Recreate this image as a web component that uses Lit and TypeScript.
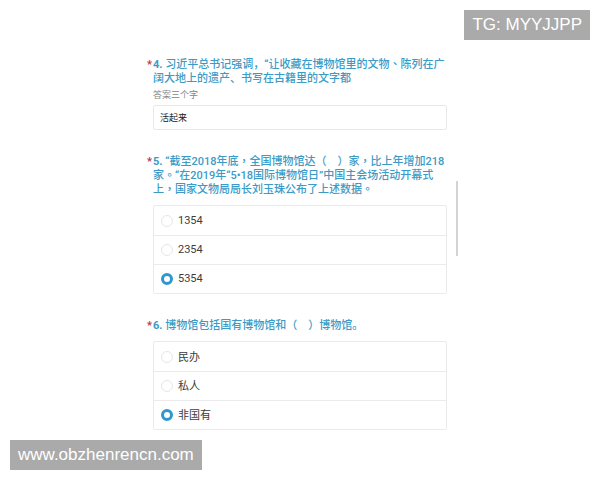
/**
 * Quiz page: three museum questions with answers filled in.
 *
 * Questions come from a small data list; each one is either
 * a text answer or a single choice.
 */
import { LitElement, html, css, nothing } from 'lit';
import type { TemplateResult } from 'lit';
import { customElement, property, state } from 'lit/decorators.js';

interface Question {
  no: number;
  title: TemplateResult;
  hint?: string;
  options?: string[];
  answer: string;
  textLabels?: boolean;
}

// Full-width punctuation.
const COMMA = '\uFF0C';
const STOP = '\u3002';
const PAUSE = '\u3001';
const BLANK = '\uFF08\u3000\uFF09';

// Punctuation centred in its square.
const mid = (s: string) => html`<span class="mid" lang="zh-TW">${s}</span>`;

const QUESTIONS: Question[] = [
  {
    no: 4,
    title: html`习近平总书记强调${COMMA}“让收藏在博物馆里的文物${mid(PAUSE)}陈列在广<br />阔大地上的遗产${PAUSE}书写在古籍里的文字都`,
    hint: '答案三个字',
    answer: '活起来',
  },
  {
    no: 5,
    title: html`“截至2018年底${mid(COMMA)}全国博物馆达${BLANK}家${mid(COMMA)}比上年增加218<br />家${mid(STOP)}“在2019年“5•18国际博物馆日”中国主会场活动开幕式<br />上${mid(COMMA)}国家文物局局长刘玉珠公布了上述数据${mid(STOP)}`,
    options: ['1354', '2354', '5354'],
    answer: '5354',
  },
  {
    no: 6,
    title: html`博物馆包括国有博物馆和${BLANK}博物馆${STOP}`,
    options: ['民办', '私人', '非国有'],
    answer: '非国有',
    textLabels: true,
  },
];

@customElement('quiz-question')
export class QuizQuestion extends LitElement {
  @property({ attribute: false }) question!: Question;
  @state() private value = '';

  static styles = css`
    :host {
      display: block;
    }
    .title {
      display: flex;
      margin: 0 0 0 -6px;
      color: #3b9bc6;
      font-size: 11px;
      font-weight: 500;
      line-height: 14px;
      white-space: nowrap;
    }
    .star {
      width: 6px;
      color: #c8323c;
      font-weight: 700;
    }
    .no {
      font-weight: 700;
    }
    .mid {
      font-family: Roboto, 'Noto Sans CJK TC', sans-serif;
    }
    .hint {
      display: block;
      margin-top: 3px;
      color: #858585;
      font-size: 9px;
      line-height: 12px;
    }
    .text {
      display: block;
      box-sizing: border-box;
      width: 100%;
      height: 25px;
      margin-top: 4px;
      padding: 0 6px;
      border: 1px solid #e8e8e8;
      border-radius: 2px;
      outline: none;
      background: #fff;
      color: #222;
      font-family: inherit;
      font-size: 9px;
    }
    .options {
      margin-top: 8px;
      border: 1px solid #ebebeb;
      border-radius: 2px;
    }
    .option {
      display: flex;
      align-items: center;
      gap: 5px;
      box-sizing: border-box;
      height: 29px;
      padding: 0 7px;
      color: #3c3c3c;
      font-size: 11px;
      line-height: 14px;
    }
    .option + .option {
      border-top: 1px solid #ebebeb;
    }
    .radio {
      appearance: none;
      box-sizing: border-box;
      width: 12px;
      height: 12px;
      margin: 0;
      border: 1px solid #e6e6e6;
      border-radius: 50%;
      background: #fff;
    }
    .radio:checked {
      border: 3px solid #2f97d0;
    }
    .han {
      padding-top: 2px;
    }
  `;

  connectedCallback(): void {
    super.connectedCallback();
    this.value = this.question.answer;
  }

  render() {
    const q = this.question;
    const title = html`
      <span class="star">*</span>
      <span><span class="no">${q.no}. </span>${q.title}</span>
    `;
    return html`
      ${q.options
        ? html`<div class="title" id="title">${title}</div>`
        : html`<label class="title" for="answer">${title}</label>`}
      ${q.hint ? html`<span class="hint">${q.hint}</span>` : nothing}
      ${q.options ? this._renderOptions(q.options) : html`
        <input
          class="text"
          id="answer"
          type="text"
          .value=${this.value}
          @input=${(e: Event) => {
            this.value = (e.target as HTMLInputElement).value;
          }}
        />
      `}
    `;
  }

  private _renderOptions(options: string[]) {
    return html`
      <div class="options" role="radiogroup" aria-labelledby="title">
        ${options.map((o) => html`
          <label class="option">
            <input
              class="radio"
              type="radio"
              name="choice"
              .checked=${this.value === o}
              @change=${() => { this.value = o; }}
            />
            <span class=${this.question.textLabels ? 'han' : 'num'}>${o}</span>
          </label>
        `)}
      </div>
    `;
  }
}

@customElement('app-root')
export class AppRoot extends LitElement {
  static styles = css`
    :host {
      display: block;
      position: relative;
      box-sizing: border-box;
      min-height: 100vh;
      background: #fff;
      font-family: Roboto, 'Noto Sans CJK SC', sans-serif;
    }
    .quiz {
      position: relative;
      display: flex;
      flex-direction: column;
      gap: 25px;
      box-sizing: border-box;
      max-width: 294px;
      margin: 0 auto;
      padding: 58px 0 48px;
    }
    .thumb {
      position: absolute;
      top: 181px;
      right: -11px;
      width: 2px;
      height: 75px;
      background: #d4d4d4;
    }
    .badge {
      position: absolute;
      padding: 0 8px;
      background: #aaa;
      color: #fff;
      font-family: 'Liberation Sans', sans-serif;
      font-size: 17px;
      line-height: 30px;
    }
    .top {
      top: 10px;
      right: 10px;
    }
    .bottom {
      bottom: 10px;
      left: 10px;
    }
  `;

  render() {
    return html`
      <main class="quiz" lang="zh-CN">
        ${QUESTIONS.map((q) => html`
          <quiz-question .question=${q}></quiz-question>
        `)}
        <div class="thumb"></div>
      </main>
      <div class="badge top">TG: MYYJJPP</div>
      <div class="badge bottom">www.obzhenrencn.com</div>
    `;
  }
}
